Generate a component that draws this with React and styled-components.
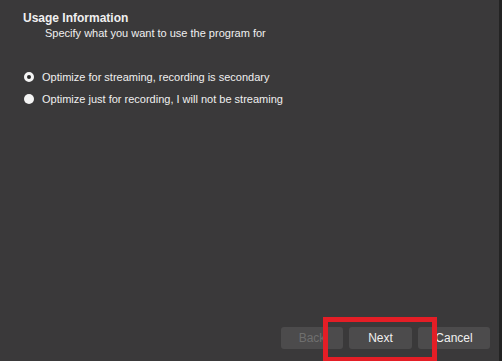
import React from "react";
import styled, { createGlobalStyle } from "styled-components";

const Global = createGlobalStyle`
  html, body { margin: 0; padding: 0; background: #3a393a; }
  body { font-family: "Liberation Sans", Arial, sans-serif; }
`;

const Window = styled.div`
  position: relative;
  box-sizing: border-box;
  width: 502px;
  height: 361px;
  background: #3a393a;
  border-right: 3px solid #232323;
  display: flex;
  flex-direction: column;
  color: #f0f0f0;
  font-size: 11px;
`;

const Header = styled.div`
  padding: 11px 0 0 23px;
  display: flex;
  flex-direction: column;
  gap: 1px;
`;

const Title = styled.div`
  font-weight: bold;
  font-size: 12px;
  line-height: 14px;
`;

const Subtitle = styled.div`
  padding-left: 22px;
  line-height: 15px;
`;

const Options = styled.div`
  margin-top: 29px;
  padding-left: 24px;
  display: flex;
  flex-direction: column;
  gap: 8px;
`;

const Option = styled.label`
  display: flex;
  align-items: center;
  gap: 8px;
  line-height: 14px;
`;

const Radio = styled.span`
  box-sizing: border-box;
  width: 10px;
  height: 10px;
  border-radius: 50%;
  background: ${(p) => (p.$checked ? "#2a2a2a" : "#f4f4f4")};
  border: ${(p) => (p.$checked ? "3px solid #f4f4f4" : "none")};
  flex: none;
`;

const Spacer = styled.div`
  flex: 1;
`;

const Footer = styled.div`
  display: flex;
  justify-content: flex-end;
  gap: 6px;
  padding: 0 9px 12px 0;
`;

const Button = styled.button`
  width: ${(p) => p.$w}px;
  height: 22px;
  border: none;
  border-radius: 3px;
  background: #4c4b4c;
  color: ${(p) => (p.disabled ? "#6f6f6f" : "#f0f0f0")};
  font-family: inherit;
  font-size: 12px;
  padding: 0;
`;

const Highlight = styled.div`
  position: absolute;
  left: 323px;
  top: 317px;
  width: 114px;
  height: 44px;
  box-sizing: border-box;
  border: 5px solid #e41e26;
  border-bottom-width: 4px;
  pointer-events: none;
`;

export default function App() {
  return (
    <>
      <Global />
      <Window>
        <Header>
          <Title>Usage Information</Title>
          <Subtitle>Specify what you want to use the program for</Subtitle>
        </Header>
        <Options>
          <Option>
            <Radio $checked />
            Optimize for streaming, recording is secondary
          </Option>
          <Option>
            <Radio />
            Optimize just for recording, I will not be streaming
          </Option>
        </Options>
        <Spacer />
        <Footer>
          <Button $w={62} disabled>Back</Button>
          <Button $w={63}>Next</Button>
          <Button $w={72}>Cancel</Button>
        </Footer>
        <Highlight />
      </Window>
    </>
  );
}
